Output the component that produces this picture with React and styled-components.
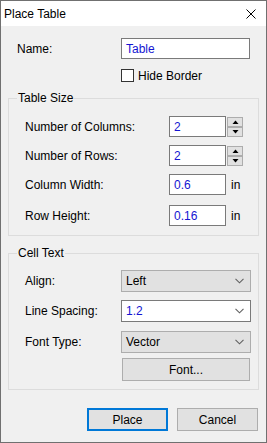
import styled, { createGlobalStyle } from "styled-components";

const GlobalStyle = createGlobalStyle`
  html, body {
    margin: 0;
    padding: 0;
    background: #ffffff;
  }
  * {
    box-sizing: border-box;
  }
`;

const Window = styled.div`
  width: 267px;
  height: 443px;
  border: 1px solid #707070;
  display: flex;
  flex-direction: column;
  font-family: "Liberation Sans", Arial, sans-serif;
  font-size: 12px;
  color: #000;
`;

const TitleBar = styled.div`
  height: 25px;
  background: #ffffff;
  display: flex;
  align-items: center;
  justify-content: space-between;
  padding: 0 10px 0 3px;
`;

const Body = styled.div`
  flex: 1;
  background: #f0f0f0;
  padding: 12px 7px 9px 7px;
  display: flex;
  flex-direction: column;
`;

const NameRow = styled.div`
  display: flex;
  align-items: center;
  padding-left: 9px;
`;

const Label = styled.div`
  width: ${({ $w }) => $w}px;
  flex-shrink: 0;
`;

const TextBox = styled.div`
  width: ${({ $w }) => $w}px;
  height: 21px;
  background: #ffffff;
  border: 1px solid #7a7a7a;
  color: #1414d2;
  display: flex;
  align-items: center;
  padding-left: 4px;
`;

const CheckRow = styled.label`
  display: flex;
  align-items: center;
  gap: 4px;
  margin: 10px 0 0 113px;
  height: 13px;
`;

const CheckBox = styled.span`
  width: 13px;
  height: 13px;
  background: #fff;
  border: 1px solid #333;
`;

const Group = styled.fieldset`
  margin: ${({ $mt }) => $mt}px 0 0 0;
  border: 1px solid #dcdcdc;
  padding: ${({ $pt }) => $pt}px 0 ${({ $pb }) => $pb}px 16px;
  display: flex;
  flex-direction: column;
  min-width: 0;
`;

const Legend = styled.legend`
  margin-left: -8px;
  padding: 0 1px;
  line-height: 16px;
  height: 16px;
`;

const Row = styled.div`
  display: flex;
  align-items: center;
  margin-top: ${({ $mt }) => $mt || 0}px;
`;

const Spinner = styled.div`
  display: flex;
  flex-direction: column;
  margin-left: 1px;
`;

const SpinButton = styled.div`
  width: 16px;
  height: 10px;
  background: #e1e1e1;
  border: 1px solid #adadad;
  display: flex;
  align-items: center;
  justify-content: center;
`;

const Unit = styled.span`
  margin-left: 5px;
`;

const Select = styled.div`
  width: 130px;
  height: 22px;
  background: ${({ $editable }) => ($editable ? "#ffffff" : "#e1e1e1")};
  border: 1px solid ${({ $editable }) => ($editable ? "#7a7a7a" : "#adadad")};
  color: ${({ $editable }) => ($editable ? "#1414d2" : "#000")};
  display: flex;
  align-items: center;
  justify-content: space-between;
  padding: 0 6px 0 4px;
`;

const Button = styled.div`
  width: ${({ $w }) => $w}px;
  height: 23px;
  background: #e1e1e1;
  border: ${({ $primary }) => ($primary ? "2px solid #0078d7" : "1px solid #adadad")};
  display: flex;
  align-items: center;
  justify-content: center;
`;

const FontButton = styled(Button)`
  margin: 5px 0 0 97px;
`;

const Footer = styled.div`
  display: flex;
  justify-content: flex-end;
  gap: 9px;
  margin-top: 18px;
  padding-right: 1px;
`;

const Chevron = () => (
  <svg width="9" height="6" viewBox="0 0 9 6">
    <path d="M0.5 0.8 L4.5 4.8 L8.5 0.8" fill="none" stroke="#606060" strokeWidth="1.1" />
  </svg>
);

const Triangle = ({ up }) => (
  <svg width="7" height="4" viewBox="0 0 7 4">
    <path d={up ? "M0.5 4 L3.5 0.5 L6.5 4 Z" : "M0.5 0 L3.5 3.5 L6.5 0 Z"} fill="#000" />
  </svg>
);

const NumberField = ({ value }) => (
  <>
    <TextBox $w={57}>{value}</TextBox>
    <Spinner>
      <SpinButton>
        <Triangle up />
      </SpinButton>
      <SpinButton>
        <Triangle />
      </SpinButton>
    </Spinner>
  </>
);

export default function App() {
  return (
    <>
      <GlobalStyle />
      <Window>
        <TitleBar>
          <span>Place Table</span>
          <svg width="10" height="10" viewBox="0 0 10 10">
            <path d="M0.5 0.5 L9.5 9.5 M9.5 0.5 L0.5 9.5" stroke="#000" strokeWidth="1" />
          </svg>
        </TitleBar>
        <Body>
          <NameRow>
            <Label $w={104}>Name:</Label>
            <TextBox $w={129}>Table</TextBox>
          </NameRow>
          <CheckRow>
            <CheckBox />
            Hide Border
          </CheckRow>

          <Group $mt={8} $pt={10} $pb={9}>
            <Legend>Table Size</Legend>
            <Row>
              <Label $w={144}>Number of Columns:</Label>
              <NumberField value="2" />
            </Row>
            <Row $mt={8}>
              <Label $w={144}>Number of Rows:</Label>
              <NumberField value="2" />
            </Row>
            <Row $mt={8}>
              <Label $w={144}>Column Width:</Label>
              <TextBox $w={57}>0.6</TextBox>
              <Unit>in</Unit>
            </Row>
            <Row $mt={10}>
              <Label $w={144}>Row Height:</Label>
              <TextBox $w={57}>0.16</TextBox>
              <Unit>in</Unit>
            </Row>
          </Group>

          <Group $mt={9} $pt={9} $pb={8}>
            <Legend>Cell Text</Legend>
            <Row>
              <Label $w={96}>Align:</Label>
              <Select>
                Left
                <Chevron />
              </Select>
            </Row>
            <Row $mt={8}>
              <Label $w={96}>Line Spacing:</Label>
              <Select $editable>
                1.2
                <Chevron />
              </Select>
            </Row>
            <Row $mt={9}>
              <Label $w={96}>Font Type:</Label>
              <Select>
                Vector
                <Chevron />
              </Select>
            </Row>
            <FontButton $w={128}>Font...</FontButton>
          </Group>

          <Footer>
            <Button $w={81} $primary>Place</Button>
            <Button $w={81}>Cancel</Button>
          </Footer>
        </Body>
      </Window>
    </>
  );
}
